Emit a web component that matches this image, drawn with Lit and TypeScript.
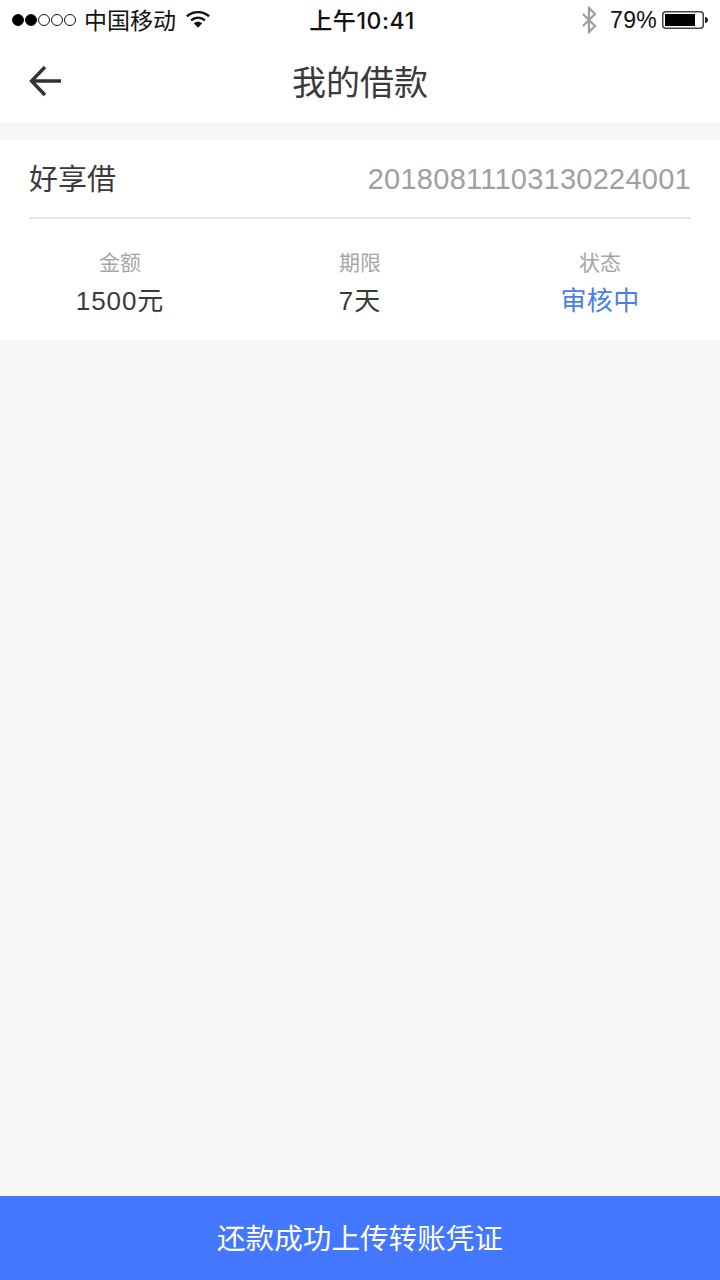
import { LitElement, html, css } from "lit";
import { customElement } from "lit/decorators.js";

@customElement("app-root")
export class AppRoot extends LitElement {
  static styles = css`
    :host {
      display: flex;
      flex-direction: column;
      width: 720px;
      height: 1280px;
      background: #f7f7f7;
      font-family: "Liberation Sans", "Noto Sans CJK SC", sans-serif;
      color: #333;
      overflow: hidden;
    }
    .status {
      height: 40px;
      background: #fff;
      display: grid;
      grid-template-columns: 1fr auto 1fr;
      align-items: center;
      color: #111;
      font-size: 23px;
    }
    .st-left { display: flex; align-items: center; padding-left: 12px; }
    .dots { display: flex; gap: 1px; margin-right: 8px; }
    .dot { width: 12px; height: 12px; border-radius: 50%; border: 1px solid #111; box-sizing: border-box; }
    .dot.on { background: #000; }
    .label { padding-bottom: 3px; }
    .wifi { margin-left: 10px; display: block; margin-bottom: 2px; }
    .time { font-family: "Inter", "Noto Sans CJK SC", sans-serif; font-size: 23px; font-weight: 500; letter-spacing: .6px; padding: 0 0 3px 4px; }
    .st-right { display: flex; align-items: center; justify-content: flex-end; padding-right: 12px; }
    .bt { margin-right: 13px; display: block; }
    .pct { font-size: 23px; margin-right: 5px; letter-spacing: .3px; }
    .batt { display: block; }
    .nav {
      height: 83px;
      background: #fff;
      display: flex;
      align-items: center;
      justify-content: center;
      position: relative;
    }
    .back { position: absolute; left: 29px; top: 25px; display: block; }
    .title { font-size: 34px; color: #3a3a3a; padding-bottom: 2px; }
    .card { margin-top: 17px; background: #fff; height: 200px; display: flex; flex-direction: column; }
    .head {
      margin: 0 29px;
      height: 77px;
      border-bottom: 2px solid #e6e6e6;
      display: flex;
      align-items: center;
      justify-content: space-between;
    }
    .name { font-size: 29px; color: #3a3a3a; padding-bottom: 3px; }
    .no { font-size: 29px; color: #a0a0a0; letter-spacing: .25px; padding-top: 1px; }
    .cols { display: grid; grid-template-columns: 1fr 1fr 1fr; flex: 1; align-content: start; padding-top: 29px; }
    .col { display: flex; flex-direction: column; align-items: center; }
    .lab { font-size: 21px; line-height: 30px; color: #a6a6a6; }
    .val { font-size: 26px; line-height: 36px; margin-top: 5px; color: #3a3a3a; letter-spacing: .9px; }
    .val.blue { color: #4a7ee8; letter-spacing: .4px; }
    .grow { flex: 1; }
    .btn {
      height: 84px;
      background: #4477ff;
      color: #fff;
      font-size: 28.6px;
      display: flex;
      align-items: center;
      justify-content: center;
      border: 0;
      padding: 0 0 3px;
      font-family: inherit;
      width: 100%;
    }
  `;

  render() {
    return html`
      <div class="status">
        <div class="st-left">
          <div class="dots">
            <span class="dot on"></span><span class="dot on"></span><span class="dot"></span><span class="dot"></span><span class="dot"></span>
          </div>
          <span class="label">中国移动</span>
          <svg class="wifi" width="24" height="19" viewBox="0 0 26 20">
            <path d="M1 6.5C8 .5 18 .5 25 6.5" fill="none" stroke="#111" stroke-width="2.6"/>
            <path d="M5.5 11C10 7.2 16 7.2 20.5 11" fill="none" stroke="#111" stroke-width="2.6"/>
            <path d="M8.5 14C11 11.8 15 11.8 17.5 14L13 19z" fill="#111"/>
          </svg>
        </div>
        <div class="time">上午10:41</div>
        <div class="st-right">
          <svg class="bt" width="16" height="28" viewBox="0 0 16 28">
            <path d="M2 8L14 20L8 26V2L14 8L2 20" fill="none" stroke="#9e9e9e" stroke-width="2.2"/>
          </svg>
          <span class="pct">79%</span>
          <svg class="batt" width="46" height="20" viewBox="0 0 46 20">
            <rect x=".75" y="1.75" width="40.5" height="16.5" rx="3" fill="#fff" stroke="#444" stroke-width="1.5"/>
            <rect x="3" y="4" width="30" height="12" fill="#000"/>
            <path d="M43 7c2 .3 3 1.3 3 3s-1 2.700-3 3z" fill="#222"/>
          </svg>
        </div>
      </div>
      <div class="nav">
        <svg class="back" width="34" height="32" viewBox="0 0 34 32">
          <path d="M32 16H3M16 2L2.500 16L16 30" fill="none" stroke="#333" stroke-width="3.400"/>
        </svg>
        <div class="title">我的借款</div>
      </div>
      <div class="card">
        <div class="head">
          <span class="name">好享借</span>
          <span class="no">20180811103130224001</span>
        </div>
        <div class="cols">
          <div class="col"><span class="lab">金额</span><span class="val">1500元</span></div>
          <div class="col"><span class="lab">期限</span><span class="val">7天</span></div>
          <div class="col"><span class="lab">状态</span><span class="val blue">审核中</span></div>
        </div>
      </div>
      <div class="grow"></div>
      <button class="btn">还款成功上传转账凭证</button>
    `;
  }
}
